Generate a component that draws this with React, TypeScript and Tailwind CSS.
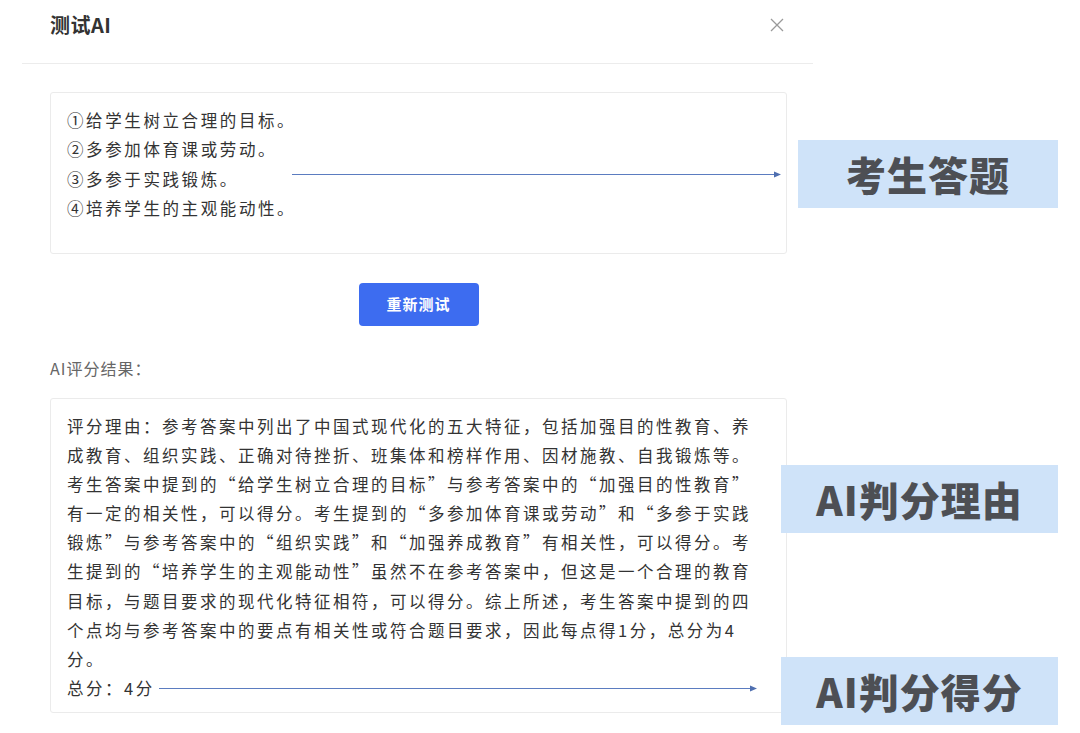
import React from 'react';

const answerLines = [
  '①给学生树立合理的目标。',
  '②多参加体育课或劳动。',
  '③多参于实践锻炼。',
  '④培养学生的主观能动性。',
];

const reasonLines = [
  '评分理由：参考答案中列出了中国式现代化的五大特征，包括加强目的性教育、养',
  '成教育、组织实践、正确对待挫折、班集体和榜样作用、因材施教、自我锻炼等。',
  '考生答案中提到的“给学生树立合理的目标”与参考答案中的“加强目的性教育”',
  '有一定的相关性，可以得分。考生提到的“多参加体育课或劳动”和“多参于实践',
  '锻炼”与参考答案中的“组织实践”和“加强养成教育”有相关性，可以得分。考',
  '生提到的“培养学生的主观能动性”虽然不在参考答案中，但这是一个合理的教育',
  '目标，与题目要求的现代化特征相符，可以得分。综上所述，考生答案中提到的四',
  '个点均与参考答案中的要点有相关性或符合题目要求，因此每点得1分，总分为4',
  '分。',
];

// thin annotation arrow pointing right
const Arrow = ({ className }: { className: string }) => (
  <div className={`flex items-center ${className}`}>
    <div className="h-px flex-1 bg-[#5b7cc0]" />
    <svg width="7" height="7" viewBox="0 0 7 7" className="-ml-px shrink-0">
      <polygon points="0,0.5 7,3.5 0,6.5" fill="#4f6fb0" />
    </svg>
  </div>
);

const Label = ({ text, className }: { text: string; className: string }) => (
  <div
    className={`absolute flex h-[68px] items-center justify-center bg-[#cfe3f9] text-[40px] font-black tracking-[1px] text-[#4d4f54] font-['Noto_Sans_CJK_SC',sans-serif] ${className}`}
  >
    {text}
  </div>
);

const App = () => {
  return (
    <div className="relative h-[733px] w-[1080px] overflow-hidden bg-white font-['Noto_Sans_CJK_SC','Noto_Sans',sans-serif] text-[#333]">
      <div className="ml-[22px] w-[791px]">
        <div className="flex h-[64px] items-start justify-between border-b border-[#ececec] pl-[28px] pr-[29px] pt-[10px]">
          <h1 className="text-[20px] font-bold leading-[30px] tracking-[0.5px] text-[#333]">测试AI</h1>
          <svg width="14" height="14" viewBox="0 0 14 14" className="mt-[8px]">
            <path d="M1 1 L13 13 M13 1 L1 13" stroke="#9a9a9a" strokeWidth="1.3" />
          </svg>
        </div>

        <div className="pl-[28px] pr-[26px] pt-[28px]">
          <div className="h-[162px] rounded-[3px] border border-[#ebebeb] px-[16px] pt-[13px]">
            {answerLines.map((line, i) =>
              i === 2 ? (
                <div key={line} className="-mr-[11px] flex items-center">
                  <p className="text-[16.5px] leading-[29.3px] tracking-[2.6px]">{line}</p>
                  <Arrow className="mb-[10px] ml-auto w-[489px]" />
                </div>
              ) : (
                <p key={line} className="text-[16.5px] leading-[29.3px] tracking-[2.6px]">
                  {line}
                </p>
              )
            )}
          </div>

          <div className="mt-[29px] flex justify-center">
            <button className="h-[43px] w-[120px] rounded-[4px] bg-[#3d6cf0] text-[15px] font-bold tracking-[1px] text-white">
              重新测试
            </button>
          </div>

          <p className="mt-[30px] text-[16px] leading-[24px] tracking-[1px] text-[#666]">AI评分结果：</p>

          <div className="mt-[18px] h-[315px] rounded-[3px] border border-[#ebebeb] px-[16px] pt-[13px]">
            {reasonLines.map((line, i) => (
              <p key={i} className="whitespace-nowrap text-[16.5px] leading-[29.1px] tracking-[2.5px]">
                {line}
              </p>
            ))}
            <div className="mr-[13px] flex items-center gap-[4px]">
              <p className="text-[16.5px] leading-[29.1px] tracking-[2.5px]">总分：4分</p>
              <Arrow className="flex-1" />
            </div>
          </div>
        </div>
      </div>

      <Label text="考生答题" className="left-[798px] top-[140px] w-[260px]" />
      <Label text="AI判分理由" className="left-[781px] top-[465px] w-[277px]" />
      <Label text="AI判分得分" className="left-[781px] top-[657px] w-[277px]" />
    </div>
  );
};

export default App;
